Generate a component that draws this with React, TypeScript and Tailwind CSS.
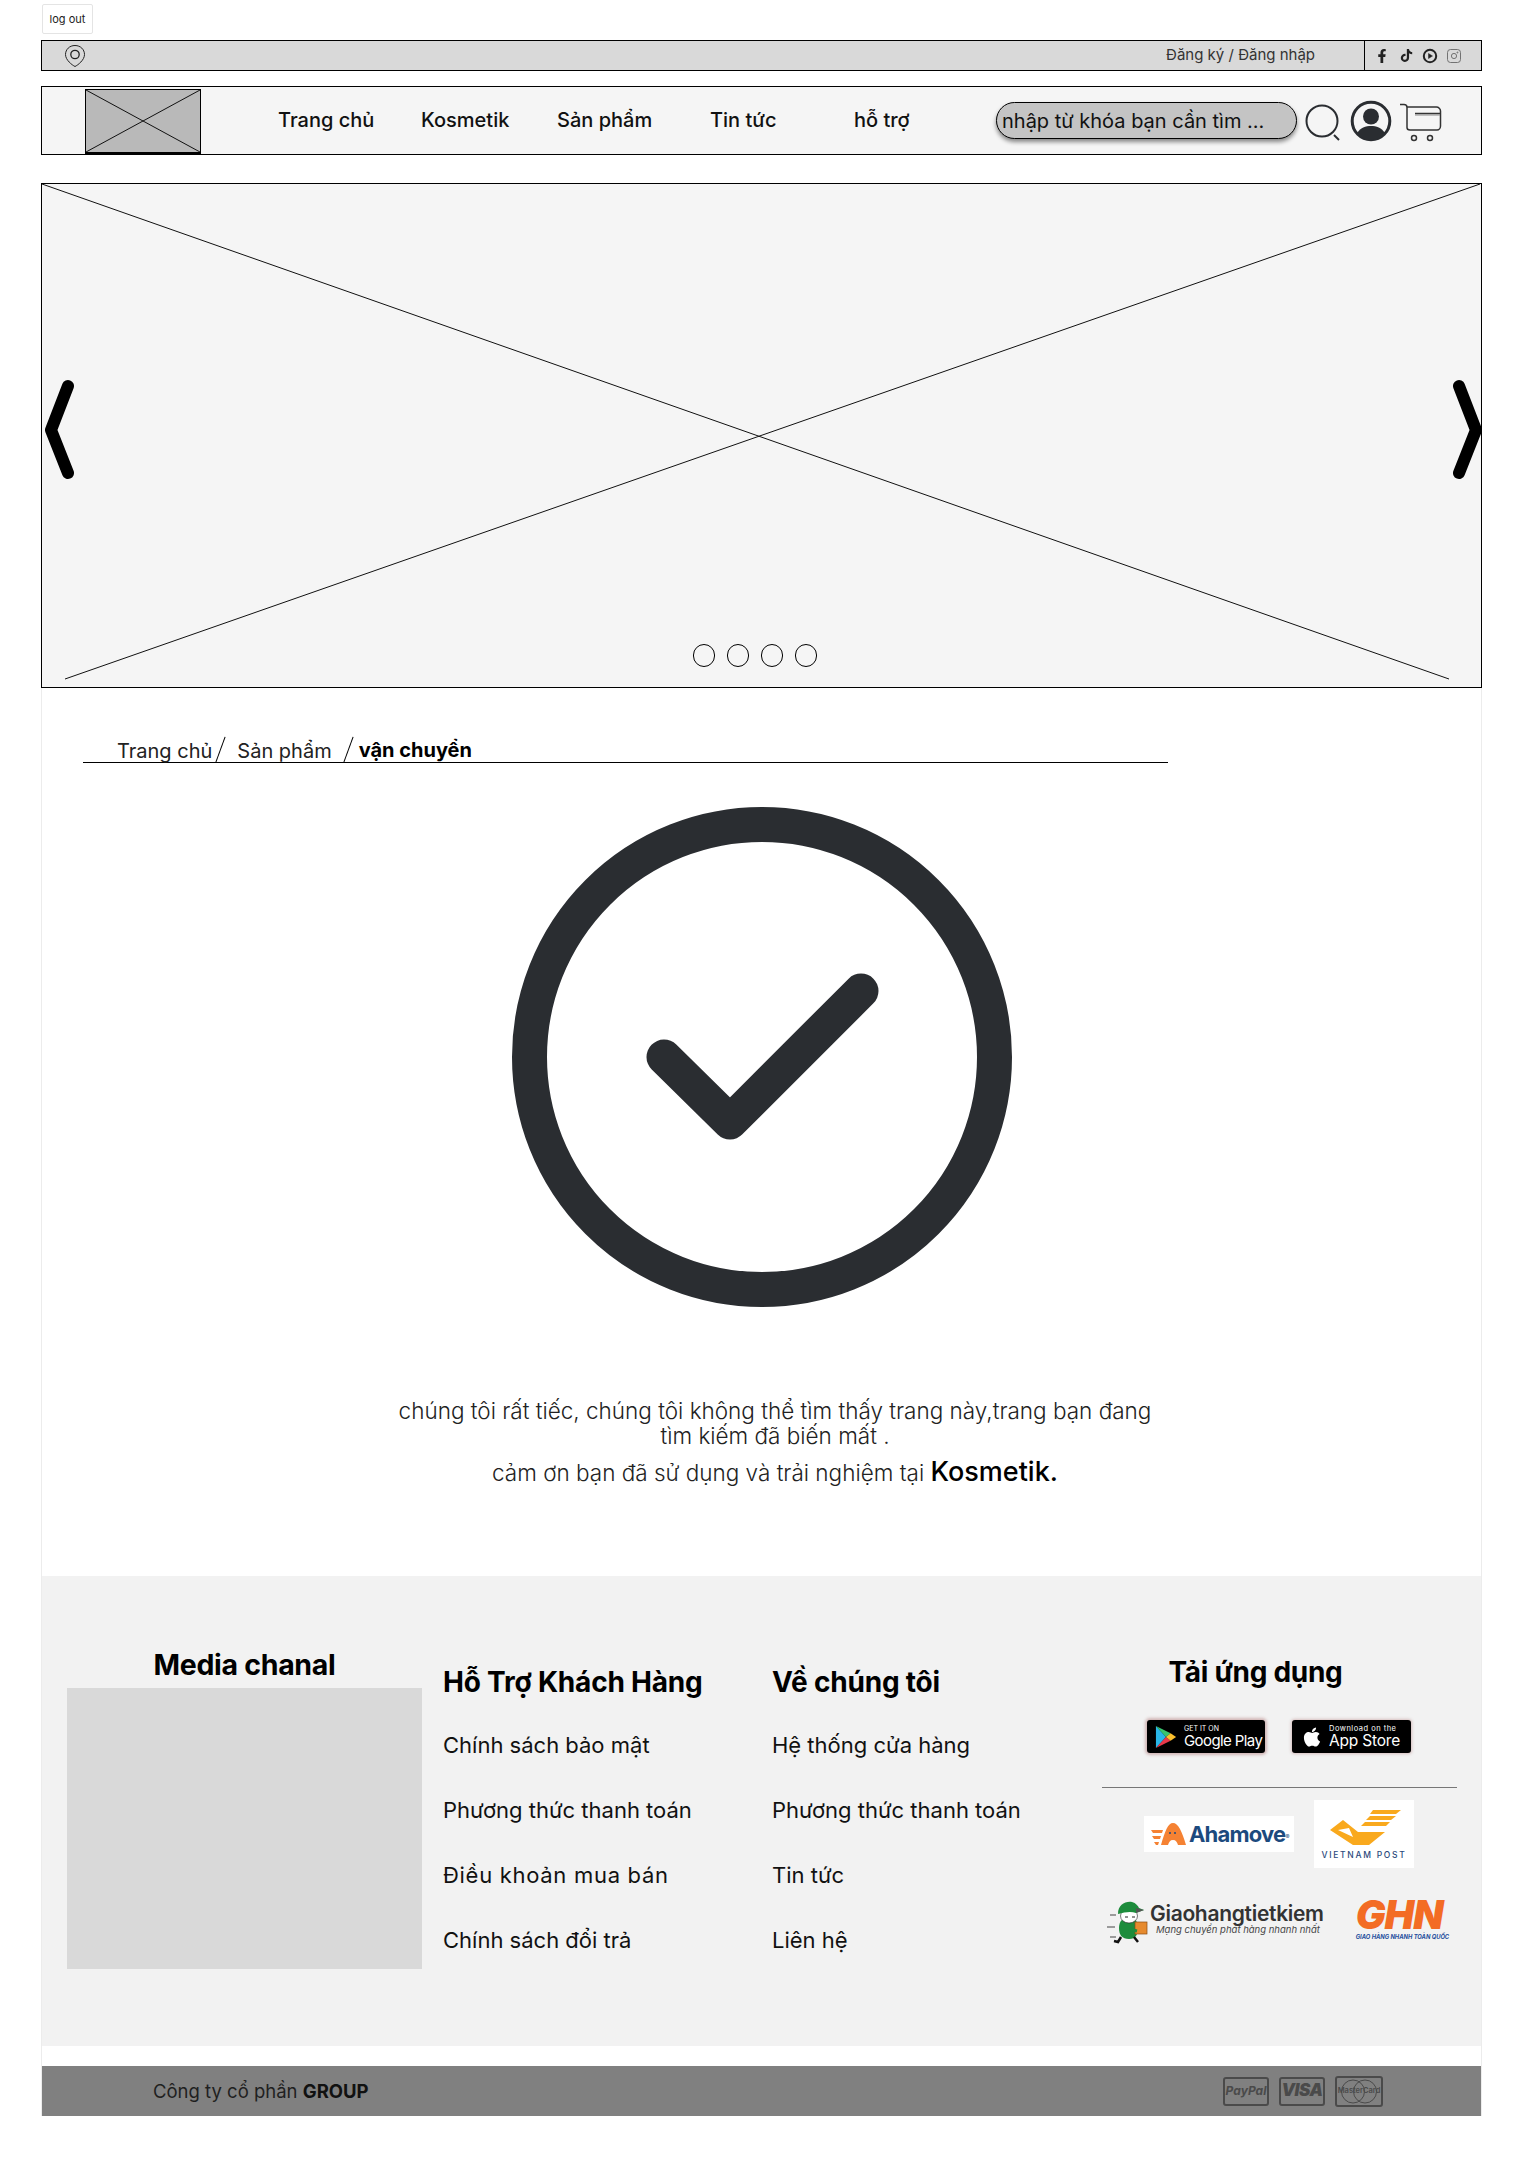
import { FaApple, FaFacebookF, FaTiktok } from "react-icons/fa";

function CrossBox({ w, h, lines }: { w: number; h: number; lines: number[][] }) {
  return (
    <svg width={w} height={h} viewBox={`0 0 ${w} ${h}`} className="block">
      {lines.map((l, i) => (
        <line key={i} x1={l[0]} y1={l[1]} x2={l[2]} y2={l[3]} stroke="#111" strokeWidth="1" />
      ))}
    </svg>
  );
}

function Pin() {
  return (
    <svg width="22" height="24" viewBox="0 0 22 24" fill="none" stroke="#222" strokeWidth="1">
      <path d="M11 1.5C5.5 1.5 1.5 5.5 1.5 10.5 1.5 16 8 21 11 22.5 14 21 20.5 16 20.5 10.5 20.5 5.5 16.5 1.5 11 1.5Z" />
      <circle cx="11" cy="10.5" r="4.2" strokeWidth="1.3" />
    </svg>
  );
}

function TopBar() {
  return (
    <div className="mt-[6px] flex h-[31px] items-center border border-black bg-[#d9d9d9]">
      <div className="ml-[22px]"><Pin /></div>
      <span className="ml-auto mr-[49px] text-[15px] text-[#333]">Đăng ký / Đăng nhập</span>
      <div className="flex h-full w-[117px] items-center border-l border-black text-[#222]">
        <FaFacebookF size={14} className="ml-[10px]" />
        <FaTiktok size={13} className="ml-[11px]" />
        <svg width="16" height="16" viewBox="0 0 16 16" fill="none" stroke="#222" strokeWidth="2" className="ml-[9px]">
          <circle cx="8" cy="8" r="6.2" />
          <path d="M6.5 5.5 10.500 8l-4 2.500Z" fill="#222" strokeWidth="0.5" />
        </svg>
        <svg width="14" height="14" viewBox="0 0 14 14" fill="none" stroke="#666" strokeWidth="0.9" className="ml-[9px]">
          <rect x="0.5" y="0.5" width="13" height="13" rx="3" />
          <circle cx="7" cy="7" r="2.600" />
          <circle cx="10.400" cy="3.500" r="0.5" />
        </svg>
      </div>
    </div>
  );
}

function NavBar() {
  const items = [
    ["Trang chủ", "w-[143px]"],
    ["Kosmetik", "w-[136px]"],
    ["Sản phẩm", "w-[153px]"],
    ["Tin tức", "w-[144px]"],
    ["hỗ trợ", "w-[143px]"],
  ];
  return (
    <div className="mt-[15px] flex h-[69px] items-center border border-black bg-[#f5f5f5]">
      <div className="ml-[43px] h-[65px] w-[116px] self-end border border-b-2 border-black bg-[#b9b9b9]">
        <CrossBox w={114} h={62} lines={[[0, 0, 114, 62], [114, 0, 0, 62]]} />
      </div>
      <nav className="-mt-[2px] ml-[77px] flex text-[20px] font-medium text-[#111]">
        {items.map(([t, w]) => (
          <span key={t} className={w}>{t}</span>
        ))}
      </nav>
      <div className="-ml-[1px] flex h-[37px] w-[301px] items-center rounded-[20px] border border-black bg-[#c4c4c4] pl-[5px] text-[20px] text-[#111] shadow-[0_3px_4px_rgba(0,0,0,0.45)]">
        nhập từ khóa bạn cần tìm ...
      </div>
      <svg width="38" height="40" viewBox="0 0 38 40" fill="none" stroke="#2a2d31" className="ml-[8px] mt-[6px]">
        <circle cx="17" cy="17" r="15.500" strokeWidth="2" />
        <path d="M29 31l5 5" strokeWidth="2" />
      </svg>
      <svg width="42" height="42" viewBox="0 0 42 42" className="ml-[7px]">
        <circle cx="21" cy="21" r="18.800" fill="none" stroke="#2a2d31" strokeWidth="3" />
        <circle cx="21" cy="16.500" r="8" fill="#2a2d31" />
        <path d="M7 33.500c3-6 9-7.500 14-7.500s11 1.500 14 7.500c-3 4-8 6.500-14 6.500S10 37.500 7 33.500Z" fill="#2a2d31" />
      </svg>
      <svg width="44" height="40" viewBox="0 0 44 40" fill="none" stroke="#333" strokeWidth="1.500" className="ml-[7px] mt-[4px]">
        <path d="M1 1.500h4c2 0 3 1 3 3v20c0 1.500 1.500 2.500 3 2.500h27c2 0 3.500-2 3.500-4V8c0-2-2-4-4-4H8" />
        <path d="M16 10.500h25" />
        <path d="M16 12h25" stroke="#888" strokeWidth="1" />
        <circle cx="15" cy="35" r="2.500" />
        <circle cx="31" cy="35" r="2.500" />
      </svg>
    </div>
  );
}

function Hero() {
  return (
    <div className="relative mt-[28px] h-[505px] border border-black bg-[#f5f5f5]">
      <CrossBox w={1438} h={503} lines={[[0, 0, 1407, 495], [1438, 0, 23, 495]]} />
      <svg width="34" height="104" viewBox="0 0 34 104" className="absolute left-[1px] top-[195px]" fill="none" stroke="#000" strokeWidth="12" strokeLinecap="round" strokeLinejoin="round">
        <path d="M25 7 8 51l17 43" />
      </svg>
      <svg width="34" height="104" viewBox="0 0 34 104" className="absolute right-[-3px] top-[195px]" fill="none" stroke="#000" strokeWidth="12" strokeLinecap="round" strokeLinejoin="round">
        <path d="M9 7l17 44L9 94" />
      </svg>
      <div className="absolute left-[651px] top-[460px] flex gap-[12px]">
        {[0, 1, 2, 3].map((i) => (
          <span key={i} className="h-[23px] w-[22px] rounded-full border border-black" />
        ))}
      </div>
    </div>
  );
}

function Breadcrumb() {
  return (
    <div className="ml-[41px] flex h-[26px] w-[1085px] items-end border-b border-black pl-[34px] text-[20px] text-[#222]">
      <span className="leading-[24px] translate-y-[1px]">Trang chủ</span>
      <span className="mb-[-1px] ml-[8px] h-[27px] w-[1px] rotate-[20deg] bg-black" />
      <span className="ml-[16px] leading-[24px] translate-y-[1px]">Sản phẩm</span>
      <span className="mb-[-1px] ml-[16px] h-[27px] w-[1px] rotate-[20deg] bg-black" />
      <span className="ml-[10px] font-bold leading-[24px] text-black">vận chuyển</span>
    </div>
  );
}

function Check() {
  return (
    <svg width="500" height="500" viewBox="0 0 500 500" className="mx-auto mt-[44px] block" fill="none" stroke="#2a2d31">
      <circle cx="250" cy="250" r="232.500" strokeWidth="35" />
      <path d="M152 250l66 65 131-131" strokeWidth="35" strokeLinecap="round" strokeLinejoin="round" />
    </svg>
  );
}

function Message() {
  return (
    <div className="ml-[353px] mt-[91px] w-[760px] text-center text-[22.500px] font-light leading-[25px] text-[#222]">
      <p>chúng tôi rất tiếc, chúng tôi không thể tìm thấy trang này,trang bạn đang tìm kiếm đã biến mất .</p>
      <p className="mt-[6px] leading-[36px]">
        cảm ơn bạn đã sử dụng và trải nghiệm tại <span className="text-[27px] font-medium text-black">Kosmetik.</span>
      </p>
    </div>
  );
}

function PlayTri() {
  return (
    <svg width="22" height="26" viewBox="0 0 24 26">
      <path d="M1 1l11 12L1 25Z" fill="#29b6e8" />
      <path d="M1 1l16 8-5 4Z" fill="#39c46e" />
      <path d="M1 25l16-8-5-4Z" fill="#e8384a" />
      <path d="M17 9l6 4-6 4-5-4Z" fill="#fbc02d" />
    </svg>
  );
}

function StoreBadges() {
  return (
    <div className="mt-[30px] flex gap-[27px] pl-[45px]">
      <div className="flex h-[33px] w-[118px] items-center gap-[7px] rounded-[3px] bg-black pl-[8px] text-white shadow-[0_0_3px_2px_rgba(150,70,70,0.35)]">
        <PlayTri />
        <div className="leading-none">
          <div className="text-[7px]">GET IT ON</div>
          <div className="mt-[1px] text-[15px] tracking-[-0.6px]">Google Play</div>
        </div>
      </div>
      <div className="flex h-[33px] w-[119px] items-center gap-[6px] rounded-[3px] bg-black pl-[9px] text-white shadow-[0_0_3px_1px_rgba(150,70,70,0.3)]">
        <FaApple size={22} />
        <div className="leading-none">
          <div className="text-[7.500px] tracking-[0.5px]">Download on the</div>
          <div className="mt-[1px] text-[15.500px] tracking-[-0.2px]">App Store</div>
        </div>
      </div>
    </div>
  );
}

function GhtkMan() {
  return (
    <svg width="44" height="46" viewBox="0 0 44 46" className="-mt-[4px] shrink-0">
      <path d="M4 16h6M1 28h8M4 38h6" stroke="#444" strokeWidth="1" />
      <path d="M13 29c0-7 4-11 10-11s9 5 9 11-2 11-9 11-10-4-10-11Z" fill="#1d8c3c" />
      <ellipse cx="23" cy="17" rx="8.500" ry="7" fill="#fff" stroke="#222" strokeWidth="0.6" />
      <path d="M12 15C12 6 19 2 26 3c4 1 6 4 7 6l5 2-8 3c-5-2-11-1-18 1Z" fill="#1d8c3c" />
      <path d="M30 9l8 2-8 3Z" fill="#555" />
      <path d="M19 18h3M26 18h3" stroke="#222" strokeWidth="1" />
      <rect x="29" y="23" width="12" height="12" fill="#e68a2e" stroke="#8a4c12" strokeWidth="0.7" />
      <path d="M23 30l8 2" stroke="#1d8c3c" strokeWidth="3" />
      <path d="M15 38l-3 5-4-1M28 38l4 5" stroke="#111" strokeWidth="2.500" fill="none" />
    </svg>
  );
}

function Carriers() {
  return (
    <div>
      <div className="mt-[12px] flex items-center pl-[42px]">
        <div className="flex h-[36px] w-[150px] items-center bg-white pl-[7px]">
          <svg width="36" height="26" viewBox="0 0 36 26" fill="#f58233">
            <path d="M10 24C14 10 17 2 22 2s9 8 13 22h-8c-1-3-2-5-5-5s-4 2-5 5Z" />
            <path d="M0 9h12l-1 3H2Zm1 6h9l-1 3H3Zm2 6h5l-1 3H5Z" />
            <circle cx="19" cy="12" r="1" fill="#1c4a7e" />
            <circle cx="24" cy="12" r="1" fill="#1c4a7e" />
          </svg>
          <span className="ml-[2px] text-[22px] font-bold tracking-[-0.8px] text-[#1c4a7e]">
            Ahamove<sup className="text-[6px] font-normal">®</sup>
          </span>
        </div>
        <div className="ml-[20px] flex h-[68px] w-[100px] flex-col items-center bg-white">
          <svg width="100" height="48" viewBox="0 0 100 48" fill="#f9a91d" className="shrink-0">
            <path d="M59 10h28l-5 4H56Zm-3 6h26l-5 4H52Zm-5 6h25l-4 4H47Z" />
            <path d="M16 30 29 20l15 12h27L55 45H39ZM24 30l15 7-4-9Z" fillRule="evenodd" />
          </svg>
          <span className="mt-[1px] whitespace-nowrap text-[8.500px] font-medium tracking-[1.700px] text-[#2c4a7c]">VIETNAM POST</span>
        </div>
      </div>
      <div className="mt-[35px] flex items-start pl-[4px]">
        <GhtkMan />
        <div className="leading-none">
          <div className="text-[21px] font-semibold tracking-[-0.3px] text-[#333]">Giaohangtietkiem</div>
          <div className="mt-[1px] pl-[6px] text-[9.500px] italic text-[#444]">Mạng chuyển phát hàng nhanh nhất</div>
        </div>
        <div className="ml-[32px] -mt-[6px] leading-none">
          <div className="text-[39.500px] font-black italic leading-[36px] tracking-[-1px] text-[#f36c24]">GHN</div>
          <div className="mt-[1px] whitespace-nowrap text-[5.800px] font-bold italic text-[#1f4e9c]">GIAO HÀNG NHANH TOÀN QUỐC</div>
        </div>
      </div>
    </div>
  );
}

function FootList({ title, items, width }: { title: string; items: string[]; width: string }) {
  return (
    <div className={`${width} pt-[87px]`}>
      <h3 className="h-[38px] text-[28px] font-bold leading-[38px] tracking-[-0.2px] text-black">{title}</h3>
      <ul className="mt-[31px] flex flex-col gap-[38px] text-[22px] leading-[27px] text-[#111]">
        {items.map((t) => <li key={t} className={t.startsWith("Điều") ? "tracking-[0.7px]" : ""}>{t}</li>)}
      </ul>
    </div>
  );
}

function Footer() {
  return (
    <div className="mt-[85px] flex h-[470px] bg-[#f2f2f2]">
      <div className="ml-[25px] w-[355px] pt-[71px]">
        <h3 className="h-[41px] text-center text-[28.500px] font-bold leading-[36px] tracking-[-0.3px] text-black">Media chanal</h3>
        <div className="h-[281px] bg-[#d9d9d9]" />
      </div>
      <div className="ml-[21px] flex">
        <FootList width="w-[329px]" title="Hỗ Trợ Khách Hàng" items={["Chính sách bảo mật", "Phương thức thanh toán", "Điều khoản mua bán", "Chính sách đổi trả"]} />
        <FootList width="w-[330px]" title="Về chúng tôi" items={["Hệ thống cửa hàng", "Phương thức thanh toán", "Tin tức", "Liên hệ"]} />
      </div>
      <div className="w-[355px] pt-[78px]">
        <h3 className="pr-[48px] text-center text-[28px] font-bold leading-[36px] tracking-[-0.3px] text-black">Tải ứng dụng</h3>
        <StoreBadges />
        <div className="mt-[34px] h-[1px] bg-[#777]" />
        <Carriers />
      </div>
    </div>
  );
}

function Pay({ children, w }: { children: React.ReactNode; w: string }) {
  return (
    <div className={`flex h-[29px] ${w} items-center justify-center overflow-hidden rounded-[3px] border-2 border-[#4a4a4a] text-[#4a4a4a]`}>{children}</div>
  );
}

function BottomBar() {
  return (
    <div className="mt-[20px] flex h-[50px] items-center bg-[#808080]">
      <p className="ml-[111px] pt-[2px] text-[18.500px] text-[#1f1f1f]">Công ty cổ phần <b className="font-bold text-[#111]">GROUP</b></p>
      <div className="ml-auto mr-[98px] flex items-center gap-[10px]">
        <Pay w="w-[46px]"><span className="text-[12px] font-bold italic">PayPal</span></Pay>
        <Pay w="w-[46px]"><span className="text-[17px] font-black italic tracking-[-0.5px]">VISA</span></Pay>
        <div className="relative flex h-[31px] w-[48px] items-center justify-center rounded-[3px] border-2 border-[#4a4a4a] text-[#4a4a4a]">
          <svg width="38" height="25" viewBox="0 0 38 25" fill="none" stroke="#4a4a4a" strokeWidth="1" className="absolute">
            <circle cx="13" cy="12.500" r="11.500" />
            <circle cx="25" cy="12.500" r="11.500" />
          </svg>
          <span className="relative text-[7.500px] font-semibold">MasterCard</span>
        </div>
      </div>
    </div>
  );
}

export default function App() {
  return (
    <div className="min-h-[2157px] bg-white font-['Inter','Noto_Sans',sans-serif]">
      <div className="ml-[41px] w-[1441px]">
        <div className="pl-[1px] pt-[4px]">
          <button className="h-[30px] w-[51px] rounded-[2px] border border-[#e4e4e4] bg-white text-[11px] text-[#222]">log out</button>
        </div>
        <TopBar />
        <NavBar />
        <Hero />
        <main className="border-x border-[#ececec] pt-[49px]">
          <Breadcrumb />
          <Check />
          <Message />
          <Footer />
          <BottomBar />
        </main>
      </div>
    </div>
  );
}
